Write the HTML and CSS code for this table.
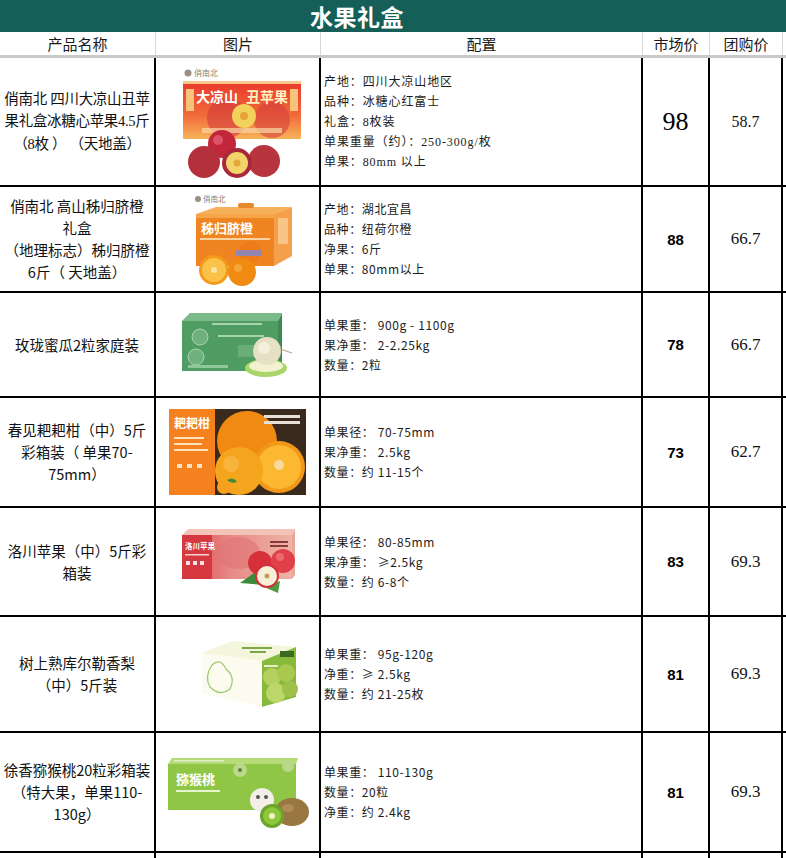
FILE: index.html
```html
<!DOCTYPE html>
<html lang="zh">
<head>
<meta charset="utf-8">
<title>水果礼盒</title>
<link rel="stylesheet" href="styles.css">
</head>
<body>
<div class="title"><span>水果礼盒</span></div>
<div class="cols head">
  <div class="hc">产品名称</div>
  <div class="hc">图片</div>
  <div class="hc">配置</div>
  <div class="hc">市场价</div>
  <div class="hc">团购价</div>
  <div class="hc last"></div>
</div>

<div class="cols row r1">
  <div class="cell name serif">俏南北 四川大凉山丑苹<br>果礼盒冰糖心苹果4.5斤<br>（8枚 ） （天地盖）</div>
  <div class="cell pic">
    <svg class="img1" width="122" height="112" viewBox="0 0 122 112">
      <defs>
        <linearGradient id="g1" x1="0" y1="0" x2="0" y2="1">
          <stop offset="0" stop-color="#e8382c"/>
          <stop offset="0.6" stop-color="#f26b3a"/>
          <stop offset="1" stop-color="#f7b35a"/>
        </linearGradient>
      </defs>
      <circle cx="6" cy="7" r="3.5" fill="#9a8f86"/>
      <text x="12" y="10" font-size="8" fill="#8a7f76" font-family="Noto Sans CJK SC">俏南北</text>
      <rect x="1" y="15" width="118" height="58" fill="url(#g1)"/>
      <rect x="1" y="15" width="118" height="3" fill="#f6c98a"/>
      <rect x="4" y="23" width="8" height="22" fill="#f7c27a"/>
      <rect x="108" y="23" width="8" height="22" fill="#f7c27a"/>
      <circle cx="45" cy="52" r="20" fill="#d23a3a" opacity="0.6"/>
      <circle cx="90" cy="54" r="18" fill="#d23a3a" opacity="0.55"/>
      <text x="14" y="36" font-size="14" font-weight="700" fill="#fff" font-family="Noto Sans CJK SC">大凉山</text>
      <text x="64" y="36" font-size="14" font-weight="700" fill="#fff3c2" font-family="Noto Sans CJK SC">丑苹果</text>
      <circle cx="62" cy="50" r="12" fill="#f3d25c"/>
      <circle cx="62" cy="50" r="4" fill="#e8a23a"/>
      <rect x="20" y="62" width="80" height="5" fill="#f9d9a6" opacity="0.7"/>
      <circle cx="40" cy="78" r="14" fill="#c2263a"/>
      <circle cx="36" cy="74" r="5" fill="#e6667a" opacity="0.7"/>
      <circle cx="22" cy="96" r="16" fill="#b3303c"/>
      <circle cx="82" cy="95" r="16" fill="#b8343e"/>
      <circle cx="55" cy="97" r="15" fill="#a8283a"/>
      <circle cx="55" cy="97" r="11" fill="#f2d46a"/>
      <circle cx="55" cy="97" r="3.5" fill="#e6a83a"/>
    </svg>
  </div>
  <div class="cell spec serif">
    <p>产地：四川大凉山地区</p>
    <p>品种：冰糖心红富士</p>
    <p>礼盒：8枚装</p>
    <p>单果重量（约）：250-300g/枚</p>
    <p>单果：80mm 以上</p>
  </div>
  <div class="cell mp big">98</div>
  <div class="cell gp gp-s">58.7</div>
  <div class="cell end"></div>
</div>

<div class="cols row r2">
  <div class="cell name">俏南北 高山秭归脐橙<br>礼盒<br>（地理标志）秭归脐橙<br>6斤（ 天地盖）</div>
  <div class="cell pic">
    <svg class="img2" width="108" height="94" viewBox="0 0 108 94">
      <circle cx="10" cy="7" r="3" fill="#9a8f86"/>
      <text x="15" y="10" font-size="7.5" fill="#8a7f76" font-family="Noto Sans CJK SC">俏南北</text>
      <polygon points="8,22 28,15 104,15 86,22" fill="#f7b05a"/>
      <rect x="50" y="11" width="16" height="5" rx="2" fill="#e88a2a"/>
      <polygon points="86,22 104,15 104,64 86,74" fill="#f4a04a"/>
      <rect x="8" y="22" width="78" height="52" fill="#f08420"/>
      <rect x="8" y="22" width="78" height="4" fill="#f6a548"/>
      <text x="13" y="41" font-size="13" font-weight="700" fill="#fff" font-family="Noto Sans CJK SC">秭归脐橙</text>
      <rect x="12" y="46" width="70" height="2" fill="#fbd3a0"/>
      <circle cx="62" cy="60" r="11" fill="#ee7a18"/>
      <rect x="48" y="58" width="26" height="6" fill="#7a8ad8" opacity="0.8"/>
      <rect x="90" y="26" width="10" height="26" fill="#f9c586"/>
      <circle cx="26" cy="78" r="15" fill="#f39a1a"/>
      <circle cx="26" cy="78" r="12" fill="#fbc24a"/>
      <circle cx="26" cy="78" r="3" fill="#fde4a0"/>
      <circle cx="54" cy="80" r="14" fill="#f18a10"/>
      <circle cx="50" cy="76" r="4" fill="#f8b04a" opacity="0.7"/>
    </svg>
  </div>
  <div class="cell spec">
    <p>产地：湖北宜昌</p>
    <p>品种：纽荷尔橙</p>
    <p>净果：6斤</p>
    <p>单果：80mm以上</p>
  </div>
  <div class="cell mp">88</div>
  <div class="cell gp">66.7</div>
  <div class="cell end"></div>
</div>

<div class="cols row r3">
  <div class="cell name">玫珑蜜瓜2粒家庭装</div>
  <div class="cell pic">
    <svg class="img3" width="118" height="68" viewBox="0 0 118 68">
      <polygon points="0,10 8,2 100,2 96,10" fill="#7cb98a"/>
      <rect x="0" y="10" width="96" height="50" fill="#4f9d62"/>
      <polygon points="96,10 100,2 100,54 96,60" fill="#3f8a52"/>
      <rect x="30" y="12" width="50" height="2" fill="#a6d2ae"/>
      <rect x="36" y="24" width="46" height="2" fill="#a6d2ae"/>
      <circle cx="18" cy="26" r="8" fill="#6fb07f" stroke="#b9dcbf" stroke-width="0.8"/>
      <circle cx="14" cy="46" r="8" fill="#6fb07f" stroke="#b9dcbf" stroke-width="0.8"/>
      <rect x="56" y="34" width="30" height="12" fill="#6aad78"/>
      <rect x="6" y="54" width="40" height="3" fill="#8fc79a"/>
      <ellipse cx="84" cy="57" rx="21" ry="9" fill="#a9d66a"/>
      <ellipse cx="84" cy="55" rx="17" ry="6" fill="#f3f1d0"/>
      <circle cx="85" cy="40" r="14" fill="#e6e1c4"/>
      <circle cx="82" cy="37" r="6" fill="#f3f0de"/>
      <path d="M98 38 q6 2 12 4" stroke="#b8a882" stroke-width="1.2" fill="none"/>
    </svg>
  </div>
  <div class="cell spec">
    <p>单果重： 900g - 1100g</p>
    <p>果净重： 2-2.25kg</p>
    <p>数量：2粒</p>
  </div>
  <div class="cell mp">78</div>
  <div class="cell gp">66.7</div>
  <div class="cell end"></div>
</div>

<div class="cols row r4">
  <div class="cell name">春见耙耙柑（中）5斤<br>彩箱装（ 单果70-<br>75mm）</div>
  <div class="cell pic">
    <svg class="img4" width="137" height="86" viewBox="0 0 137 86">
      <rect x="0" y="0" width="137" height="86" fill="#2b221c"/>
      <rect x="45" y="0" width="92" height="86" fill="#3a2a1e"/>
      <circle cx="78" cy="32" r="30" fill="#f08a12"/>
      <circle cx="110" cy="58" r="26" fill="#f29818"/>
      <circle cx="110" cy="58" r="22" fill="#fbb830"/>
      <circle cx="110" cy="56" r="5" fill="#f8d9a0"/>
      <circle cx="70" cy="62" r="24" fill="#f5a41e"/>
      <circle cx="62" cy="55" r="8" fill="#f8be52" opacity="0.6"/>
      <rect x="0" y="0" width="46" height="86" fill="#f4811e"/>
      <text x="5" y="19" font-size="12" font-weight="700" fill="#fff" font-family="Noto Sans CJK SC">耙耙柑</text>
      <rect x="5" y="28" width="30" height="2" fill="#fde0bc"/>
      <rect x="5" y="34" width="28" height="2" fill="#fde0bc"/>
      <rect x="5" y="40" width="34" height="2" fill="#fde0bc"/>
      <rect x="8" y="55" width="5" height="4" fill="#fde0bc"/>
      <rect x="18" y="55" width="5" height="4" fill="#fde0bc"/>
      <rect x="28" y="55" width="5" height="4" fill="#fde0bc"/>
      <rect x="95" y="6" width="36" height="3" fill="#e8e0d6"/>
      <rect x="95" y="12" width="36" height="3" fill="#e8e0d6"/>
      <circle cx="55" cy="78" r="7" fill="#f7a020"/>
      <path d="M58 71 q6 -4 10 2 q-6 2 -10 -2z" fill="#3c8a3a"/>
    </svg>
  </div>
  <div class="cell spec">
    <p>单果径： 70-75mm</p>
    <p>果净重： 2.5kg</p>
    <p>数量：约 11-15个</p>
  </div>
  <div class="cell mp">73</div>
  <div class="cell gp">62.7</div>
  <div class="cell end"></div>
</div>

<div class="cols row r5">
  <div class="cell name">洛川苹果（中）5斤彩<br>箱装</div>
  <div class="cell pic">
    <svg class="img5" width="118" height="70" viewBox="0 0 118 70">
      <defs>
        <linearGradient id="g5" x1="0" y1="0" x2="1" y2="0">
          <stop offset="0" stop-color="#d8474c"/>
          <stop offset="0.45" stop-color="#e88a86"/>
          <stop offset="1" stop-color="#efb3a6"/>
        </linearGradient>
      </defs>
      <polygon points="2,8 8,2 115,2 112,8" fill="#f2c4b8"/>
      <rect x="2" y="8" width="110" height="44" fill="url(#g5)"/>
      <polygon points="112,8 115,2 115,48 112,52" fill="#e9a698"/>
      <rect x="2" y="8" width="30" height="44" fill="#d5393f"/>
      <text x="5" y="22" font-size="7.5" font-weight="700" fill="#fff" font-family="Noto Sans CJK SC">洛川苹果</text>
      <rect x="5" y="27" width="24" height="1.5" fill="#f7cfcf"/>
      <rect x="6" y="34" width="4" height="4" fill="#fbe1e1"/>
      <rect x="13" y="34" width="4" height="4" fill="#fbe1e1"/>
      <rect x="20" y="34" width="4" height="4" fill="#fbe1e1"/>
      <ellipse cx="58" cy="26" rx="22" ry="16" fill="#e07878" opacity="0.7"/>
      <rect x="90" y="14" width="18" height="2" fill="#8a3a3a"/>
      <rect x="90" y="18" width="18" height="2" fill="#8a3a3a"/>
      <path d="M60 56 l14 -10 l10 12 z" fill="#3e8a3c"/>
      <path d="M84 60 l16 -6 l-2 12 z" fill="#4d9a44"/>
      <circle cx="80" cy="36" r="12" fill="#d6303a"/>
      <circle cx="103" cy="34" r="12" fill="#e0404a"/>
      <circle cx="100" cy="30" r="4" fill="#f07a80" opacity="0.7"/>
      <circle cx="87" cy="49" r="12" fill="#d0303a"/>
      <circle cx="87" cy="49" r="10" fill="#f7efd8"/>
      <circle cx="87" cy="49" r="2.5" fill="#c89a5a"/>
    </svg>
  </div>
  <div class="cell spec">
    <p>单果径： 80-85mm</p>
    <p>果净重： ≥2.5kg</p>
    <p>数量：约 6-8个</p>
  </div>
  <div class="cell mp">83</div>
  <div class="cell gp">69.3</div>
  <div class="cell end"></div>
</div>

<div class="cols row r6">
  <div class="cell name">树上熟库尔勒香梨<br>（中）5斤装</div>
  <div class="cell pic">
    <svg class="img6" width="98" height="70" viewBox="0 0 98 70">
      <polygon points="2,14 32,2 96,8 62,22" fill="#f4f6dc"/>
      <rect x="42" y="8" width="30" height="2" fill="#7aa84a"/>
      <rect x="50" y="12" width="16" height="2" fill="#7aa84a"/>
      <polygon points="2,14 62,22 62,68 2,54" fill="#fbfbef"/>
      <path d="M12 26 q8 -8 14 4 q10 8 4 20 q-10 8 -20 -2 q-6 -10 2 -22z" fill="none" stroke="#9cc86a" stroke-width="1.2"/>
      <polygon points="62,22 96,8 96,58 62,68" fill="#86b93c"/>
      <rect x="80" y="12" width="14" height="6" fill="#3a6a20"/>
      <circle cx="72" cy="38" r="9" fill="#b4d060"/>
      <circle cx="86" cy="34" r="9" fill="#a8c84e"/>
      <circle cx="76" cy="54" r="10" fill="#bcd66a"/>
      <circle cx="90" cy="50" r="8" fill="#9fc04a"/>
      <rect x="64" y="26" width="14" height="2" fill="#e6f0c8"/>
    </svg>
  </div>
  <div class="cell spec">
    <p>单果重： 95g-120g</p>
    <p>净重：≥ 2.5kg</p>
    <p>数量：约 21-25枚</p>
  </div>
  <div class="cell mp">81</div>
  <div class="cell gp">69.3</div>
  <div class="cell end"></div>
</div>

<div class="cols row r7">
  <div class="cell name">徐香猕猴桃20粒彩箱装<br>（特大果，单果110-<br>130g）</div>
  <div class="cell pic">
    <svg class="img7" width="142" height="72" viewBox="0 0 142 72">
      <polygon points="0,8 4,2 130,2 128,8" fill="#b6dc7a"/>
      <rect x="0" y="8" width="128" height="46" fill="#90c646"/>
      <rect x="6" y="4" width="50" height="1.5" fill="#dff0c4"/>
      <text x="8" y="28" font-size="13" font-weight="700" fill="#fff" font-family="Noto Sans CJK SC">猕猴桃</text>
      <rect x="8" y="34" width="44" height="2" fill="#e6f4d0"/>
      <circle cx="72" cy="14" r="7" fill="#b9d98a"/>
      <circle cx="72" cy="14" r="2" fill="#6a7a3a"/>
      <circle cx="120" cy="10" r="6" fill="#b9d98a"/>
      <circle cx="94" cy="44" r="12" fill="#f4eee8"/>
      <circle cx="90" cy="41" r="2" fill="#555"/>
      <circle cx="98" cy="41" r="2" fill="#555"/>
      <ellipse cx="124" cy="56" rx="17" ry="14" fill="#9a7640"/>
      <ellipse cx="120" cy="52" rx="6" ry="4" fill="#b89460" opacity="0.7"/>
      <circle cx="104" cy="60" r="12" fill="#6aa42a"/>
      <circle cx="104" cy="60" r="9" fill="#8ec63a"/>
      <circle cx="104" cy="60" r="3" fill="#eef4c8"/>
    </svg>
  </div>
  <div class="cell spec">
    <p>单果重： 110-130g</p>
    <p>数量：20粒</p>
    <p>净重：约 2.4kg</p>
  </div>
  <div class="cell mp">81</div>
  <div class="cell gp">69.3</div>
  <div class="cell end"></div>
</div>

<div class="cols row r8">
  <div class="cell"></div>
  <div class="cell"></div>
  <div class="cell"></div>
  <div class="cell"></div>
  <div class="cell"></div>
  <div class="cell end"></div>
</div>
</body>
</html>
```

FILE: styles.css
```css
html, body {
  margin: 0;
  padding: 0;
  background: #fff;
}
body {
  width: 786px;
  overflow: hidden;
  font-family: "Noto Sans CJK SC", "Noto Sans", sans-serif;
  color: #111;
}
.title {
  height: 32px;
  background: #165f58;
  color: #fff;
  font-size: 23px;
  font-weight: 700;
  line-height: 32px;
  padding-left: 310px;
  letter-spacing: 0.5px;
}
.cols {
  display: grid;
  grid-template-columns: 156px 165px 322px 67px 73px 1fr;
}
.head {
  box-sizing: border-box;
  height: 26px;
  border-bottom: 3px solid #c9c9c9;
}
.hc {
  box-sizing: border-box;
  border-right: 1.5px solid #d8d8d8;
  display: flex;
  align-items: center;
  justify-content: center;
  font-size: 15px;
  color: #1a1a1a;
  height: 23px;
}
.hc.last {
  border-right: none;
}
.row .cell {
  box-sizing: border-box;
  border-right: 2px solid #000;
  border-bottom: 2px solid #000;
  display: flex;
  align-items: center;
}
.row .cell.end {
  border-right: none;
}
.r1 { height: 129px; }
.r2 { height: 106px; }
.r3 { height: 105px; }
.r4 { height: 110px; }
.r5 { height: 109px; }
.r6 { height: 116px; }
.r7 { height: 120px; }
.r8 { height: 30px; }

.row .name {
  justify-content: center;
  text-align: center;
  font-size: 14.5px;
  line-height: 22px;
  white-space: nowrap;
  color: #111;
}
.row .name.serif {
  font-family: "Liberation Serif", "Noto Sans CJK SC", serif;
  line-height: 22.5px;
  letter-spacing: -0.3px;
}
.row .pic {
  justify-content: center;
}
.pic svg {
  display: block;
}
.img1 { margin-left: 10px; }
.img2 { margin-left: 8px; }
.img3 { margin-left: 6px; }
.img4 { margin-left: 0; }
.img5 { margin-left: 2px; }
.img6 { margin-left: 22px; }
.img7 { margin-left: 2px; }

.row .spec {
  flex-direction: column;
  align-items: flex-start;
  justify-content: center;
  padding-left: 3px;
  font-size: 12px;
  color: #1c1c1c;
  letter-spacing: 0.6px;
}
.spec p {
  margin: 0;
  line-height: 20px;
  white-space: nowrap;
}
.row .spec.serif {
  font-family: "Liberation Serif", "Noto Sans CJK SC", serif;
  font-size: 12px;
  letter-spacing: 0.9px;
}
.row .mp {
  justify-content: center;
  font-family: "Liberation Sans", Arial, sans-serif;
  font-weight: 700;
  font-size: 15px;
  color: #000;
}
.row .mp.big {
  font-family: "Liberation Serif", serif;
  font-weight: 400;
  font-size: 26px;
}
.row .gp {
  justify-content: center;
  font-family: "Liberation Serif", serif;
  font-size: 17px;
  color: #111;
}
.row .gp.gp-s {
  font-size: 16px;
}
```
